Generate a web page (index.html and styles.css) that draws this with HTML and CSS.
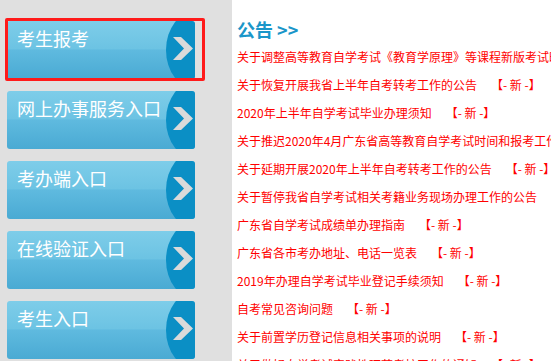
FILE: index.html
```html
<!DOCTYPE html>
<html lang="zh-CN">
<head>
<meta charset="utf-8">
<title>公告</title>
<link rel="stylesheet" href="styles.css">
</head>
<body>
<div class="page">
  <div class="side">
    <a class="btn current" href="#"><span class="label">考生报考</span><span class="cap"></span><svg class="chev" viewBox="0 0 20 23"><polygon points="0,0 8,0 20,11.5 8,23 0,23 11,11.5"/></svg><span class="mark"></span></a>
    <a class="btn" href="#"><span class="label">网上办事服务入口</span><span class="cap"></span><svg class="chev" viewBox="0 0 20 23"><polygon points="0,0 8,0 20,11.5 8,23 0,23 11,11.5"/></svg></a>
    <a class="btn" href="#"><span class="label">考办端入口</span><span class="cap"></span><svg class="chev" viewBox="0 0 20 23"><polygon points="0,0 8,0 20,11.5 8,23 0,23 11,11.5"/></svg></a>
    <a class="btn" href="#"><span class="label">在线验证入口</span><span class="cap"></span><svg class="chev" viewBox="0 0 20 23"><polygon points="0,0 8,0 20,11.5 8,23 0,23 11,11.5"/></svg></a>
    <a class="btn" href="#"><span class="label">考生入口</span><span class="cap"></span><svg class="chev" viewBox="0 0 20 23"><polygon points="0,0 8,0 20,11.5 8,23 0,23 11,11.5"/></svg></a>
  </div>
  <div class="main">
    <h2 class="title">公告 &gt;&gt;</h2>
    <ul class="news">
      <li><a href="#">关于调整高等教育自学考试《教育学原理》等课程新版考试时间的通知</a><span class="new">【- 新 -】</span></li>
      <li><a href="#">关于恢复开展我省上半年自考转考工作的公告</a><span class="new">【- 新 -】</span></li>
      <li><a href="#">2020年上半年自学考试毕业办理须知</a><span class="new">【- 新 -】</span></li>
      <li><a href="#">关于推迟2020年4月广东省高等教育自学考试时间和报考工作的公告</a><span class="new">【- 新 -】</span></li>
      <li><a href="#">关于延期开展2020年上半年自考转考工作的公告</a><span class="new">【- 新 -】</span></li>
      <li><a href="#">关于暂停我省自学考试相关考籍业务现场办理工作的公告</a><span class="new">【- 新 -】</span></li>
      <li><a href="#">广东省自学考试成绩单办理指南</a><span class="new">【- 新 -】</span></li>
      <li><a href="#">广东省各市考办地址、电话一览表</a><span class="new">【- 新 -】</span></li>
      <li><a href="#">2019年办理自学考试毕业登记手续须知</a><span class="new">【- 新 -】</span></li>
      <li><a href="#">自考常见咨询问题</a><span class="new">【- 新 -】</span></li>
      <li><a href="#">关于前置学历登记信息相关事项的说明</a><span class="new">【- 新 -】</span></li>
      <li><a href="#">关于做好自学考试实践性环节考核工作的通知</a><span class="new">【- 新 -】</span></li>
    </ul>
  </div>
</div>
</body>
</html>
```

FILE: styles.css
```css
html, body {
  margin: 0;
  padding: 0;
  background: #ffffff;
  overflow: hidden;
}

.page {
  display: flex;
  width: 551px;
  height: 361px;
  overflow: hidden;
  font-family: "Noto Sans CJK SC", "Noto Sans", sans-serif;
}

.side {
  width: 225px;
  flex: none;
  background: #e0e0e0;
  padding: 21px 0 0 7px;
  display: flex;
  flex-direction: column;
  gap: 12px;
}

.btn {
  position: relative;
  display: block;
  width: 188px;
  height: 58px;
  flex: none;
  border-radius: 3px;
  text-decoration: none;
  background: linear-gradient(#7ecde9 0%, #6cc3e3 48%, #5fbadf 50%, #4aaad3 100%);
}

.cap {
  position: absolute;
  top: 0;
  right: 0;
  width: 29px;
  height: 58px;
  overflow: hidden;
  border-radius: 0 3px 3px 0;
}

.cap::before {
  content: "";
  position: absolute;
  left: 0;
  top: -10px;
  width: 60px;
  height: 78px;
  border-radius: 50%;
  background: #0b8fc5;
}

.label {
  position: relative;
  display: block;
  padding: 5px 0 0 10px;
  color: #ffffff;
  font-size: 18px;
  line-height: 24px;
  white-space: nowrap;
}

.chev {
  position: absolute;
  left: 166px;
  top: 16px;
  width: 20px;
  height: 23px;
  fill: #dadada;
}

.mark {
  position: absolute;
  left: -2px;
  top: -3px;
  width: 194px;
  height: 57px;
  border: 3px solid #ff1a1a;
  border-radius: 2px;
}

.main {
  flex: 1;
  min-width: 0;
  padding: 15px 0 0 5px;
  overflow: hidden;
}

.title {
  margin: 0;
  font-size: 18px;
  line-height: 28px;
  font-weight: bold;
  color: #1a96c9;
  white-space: nowrap;
}

.news {
  list-style: none;
  margin: 0;
  padding: 0;
}

.news li {
  font-size: 12px;
  line-height: 28px;
  height: 28px;
  white-space: nowrap;
  color: #ff0000;
}

.news a {
  color: #ff0000;
  text-decoration: none;
}

.new {
  margin-left: 14px;
  color: #ff0000;
}
```
